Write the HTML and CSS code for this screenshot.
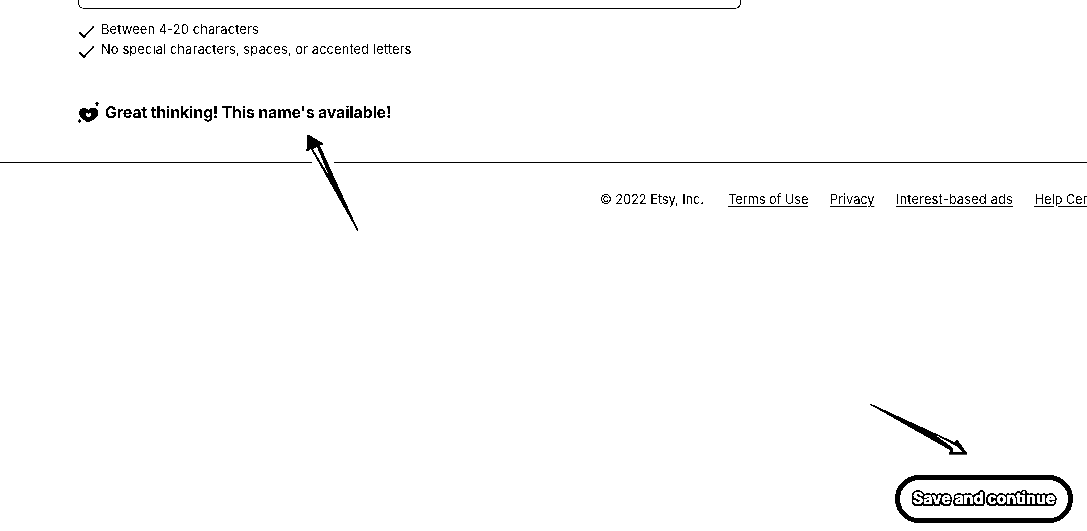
FILE: index.html
```html
<!DOCTYPE html>
<html lang="en">
<head>
<meta charset="utf-8">
<title>Name your shop</title>
<link rel="stylesheet" href="styles.css">
</head>
<body>
<div class="page">
  <main class="form">
    <div class="input-edge"></div>
    <ul class="rules">
      <li class="rule">
        <svg class="check" viewBox="0 0 18 14" width="18" height="14"><path d="M1 7 L6 12 L16 1" /></svg>
        <span>Between 4-20 characters</span>
      </li>
      <li class="rule">
        <svg class="check" viewBox="0 0 18 14" width="18" height="14"><path d="M1 7 L6 12 L16 1" /></svg>
        <span>No special characters, spaces, or accented letters</span>
      </li>
    </ul>
    <p class="status">
      <svg class="heart" viewBox="0 0 24 24" width="24" height="24">
        <path class="heart-fill" d="M10.500 22 C7 20.500 1.500 17 1.500 12.500 C1.500 10 3.500 8.500 6 8.500 C8 8.500 9.500 9.500 10.500 10.800 C11.500 9.500 13 8 15 8 C18 8 20 10 20 12.500 C20 17 14.500 20 10.500 22 Z"/>
        <path class="heart-hole" d="M10.500 17.500 C9 16.500 7.500 15.500 7.500 14.200 C7.500 13 9.500 12.500 10.500 13.800 C11.500 12.500 13.500 13 13.500 14.200 C13.500 15.500 12 16.500 10.500 17.500 Z"/>
        <path class="spark" d="M19 1.500 V6 M17 3.700 H21 M1.800 19 V23.500 M0 21.200 H3.600"/>
      </svg>
      <span>Great thinking! This name's available!</span>
    </p>
  </main>
  <footer class="footer">
    <span class="copy">© 2022 Etsy, Inc.</span>
    <a class="link" href="#">Terms of Use</a>
    <a class="link" href="#">Privacy</a>
    <a class="link link-wide" href="#">Interest-based ads</a>
    <a class="link" href="#">Help Center</a>
  </footer>
  <button class="save" type="button"><span class="save-label">Save and continue</span></button>
  <svg class="annotations" viewBox="0 0 1087 531" width="1087" height="531">
    <path class="arrow-halo" d="M358 231 L311 148 L319 145 Z"/>
    <path class="arrow" d="M358 231 L311 148 L307 151 L308 135 L323 144 L319 145 Z"/>
    <path class="arrow-hole" d="M313 149 L317 147 L329 176 Z"/>
    <path class="arrow" d="M870 404 L955 443 L957 440 L967 454 L949 454 L951 450 Z"/>
    <path class="arrow-hole" d="M934 434 L956 446 L963 452 L953 452 L953 448 Z"/>
  </svg>
</div>
</body>
</html>
```
FILE: styles.css
```css
* { box-sizing: border-box; }
html, body { margin: 0; padding: 0; height: 100%; overflow: hidden; background: #fff; }
.page {
  position: relative;
  width: 1087px;
  height: 531px;
  overflow: hidden;
  background: #fff;
  color: #000;
  font-family: Inter, "Liberation Sans", sans-serif;
  filter: grayscale(1) contrast(100);
}
.form {
  height: 163px;
  padding-left: 78px;
  border-bottom: 1px solid #000;
}
.input-edge {
  width: 663px;
  height: 9px;
  border: 1px solid #444;
  border-top: 0;
  border-radius: 0 0 6px 6px;
}
.rules {
  list-style: none;
  margin: 0;
  padding: 10px 0 0;
  display: flex;
  flex-direction: column;
}
.rule {
  height: 20px;
  display: flex;
  align-items: flex-start;
  gap: 5px;
  font-size: 13px;
  line-height: 20px;
  letter-spacing: 0.05px;
}
.check {
  flex: none;
  margin-top: 6px;
  fill: none;
  stroke: #000;
  stroke-width: 1.6;
}
.status {
  margin: 41px 0 0;
  height: 24px;
  display: flex;
  align-items: center;
  gap: 3px;
  font-size: 16px;
  font-weight: 700;
  letter-spacing: -0.2px;
  line-height: 24px;
}
.heart { flex: none; }
.heart-fill { fill: #000; stroke: #000; stroke-width: 1; }
.heart-hole { fill: #fff; }
.spark { stroke: #000; stroke-width: 1.2; fill: none; }
.footer {
  display: flex;
  align-items: center;
  gap: 21.5px;
  height: 20px;
  margin-top: 26px;
  padding-left: 600px;
  font-size: 13px;
  line-height: 20px;
  letter-spacing: -0.15px;
  white-space: nowrap;
}
.copy { margin-right: 2.5px; }
.link { color: #000; text-decoration: underline; text-underline-offset: 2px; }
.link-wide { letter-spacing: 0.08px; }
.save {
  position: absolute;
  left: 895px;
  top: 475px;
  width: 178px;
  height: 48px;
  padding: 0 0 3px;
  display: flex;
  align-items: center;
  justify-content: center;
  background: #fff;
  border: 5px solid #000;
  border-radius: 24px;
  font-family: Inter, "Liberation Sans", sans-serif;
}
.save-label {
  display: block;
  color: #fff;
  font-size: 16px;
  font-weight: 700;
  letter-spacing: -0.1px;
  line-height: 18px;
  -webkit-text-stroke: 0.3px #fff;
  text-shadow: 2px 0 #000, -2px 0 #000, 0 2px #000, 0 -2px #000, 1.500px 1.500px #000, -1.500px 1.500px #000, 1.500px -1.500px #000, -1.500px -1.500px #000;
}
.annotations { position: absolute; left: 0; top: 0; pointer-events: none; }
.arrow { fill: #000; stroke: #000; stroke-width: 1.2; stroke-linejoin: round; }
.arrow-hole { fill: #fff; }
.arrow-halo { fill: #fff; stroke: #fff; stroke-width: 12; stroke-linejoin: round; }
```
